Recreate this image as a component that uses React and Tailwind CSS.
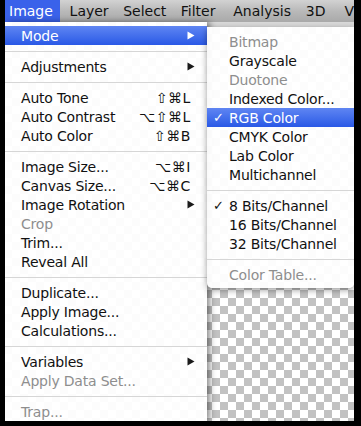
import React from "react";

const Arrow = ({ white }) => (
  <svg width="8" height="9" viewBox="0 0 8 9" className="shrink-0">
    <path d="M0.5 0.5 L7.5 4.5 L0.5 8.5 Z" fill={white ? "#ffffff" : "#1a1a1a"} />
  </svg>
);

const Sep = () => (
  <div className="h-[12px] flex items-center">
    <div className="h-px w-full bg-[#d6d6d6]" />
  </div>
);

function Item({ label, shortcut, arrow, disabled, active }) {
  return (
    <div
      className={
        "h-[19px] flex items-center pl-[16px] " +
        (active
          ? "bg-gradient-to-b from-[#5f85f2] to-[#2a58e6] text-white "
          : disabled
          ? "text-[#8e8e8e] "
          : "text-[#111111] ")
      }
    >
      <span className="flex-1 whitespace-nowrap">{label}</span>
      {shortcut && (
        <span className="pr-[16px] whitespace-nowrap tracking-[0.6px]">{shortcut}</span>
      )}
      {arrow && (
        <span className="pr-[12px] flex items-center">
          <Arrow white={active} />
        </span>
      )}
    </div>
  );
}

function SubItem({ label, checked, disabled, active }) {
  return (
    <div
      className={
        "h-[19px] flex items-center " +
        (active
          ? "bg-gradient-to-b from-[#5f85f2] to-[#2a58e6] text-white "
          : disabled
          ? "text-[#8e8e8e] "
          : "text-[#111111] ")
      }
    >
      <span className="w-[22px] pl-[6px] text-[13px] leading-none">{checked ? "✓" : ""}</span>
      <span className="whitespace-nowrap">{label}</span>
    </div>
  );
}

export default function App() {
  return (
    <div className="w-[361px] h-[426px] bg-black pl-[5px] pr-[7px] pb-[5px] font-['DejaVu_Sans',sans-serif] text-[14px] leading-none tracking-[-0.2px]">
      <div className="w-[349px] h-[421px] flex flex-col overflow-hidden bg-[conic-gradient(#c2c2c2_25%,#ffffff_0_50%,#c2c2c2_0_75%,#ffffff_0)] bg-[length:16px_16px] bg-[position:-1px_2px]">
        {/* menubar */}
        <div className="h-[22px] shrink-0 flex items-stretch bg-gradient-to-b from-[#d2d2d2] via-[#b9b9b9] to-[#a9a9a9] text-[#111111] text-[14px] tracking-normal">
          <div className="w-[55px] pl-[4px] flex items-center bg-[#3a62ea] text-white">Image</div>
          <div className="w-[54px] ml-[10px] flex items-center">Layer</div>
          <div className="w-[58px] flex items-center">Select</div>
          <div className="w-[53px] flex items-center">Filter</div>
          <div className="w-[73px] flex items-center">Analysis</div>
          <div className="w-[39px] flex items-center">3D</div>
          <div className="flex items-center">V</div>
        </div>
        <div className="flex flex-1 min-h-0">
          {/* main menu */}
          <div className="w-[202px] shrink-0 relative z-10 bg-[rgba(255,255,255,0.94)] pt-[4px] shadow-[3px_0_6px_rgba(0,0,0,0.45)]">
            <Item label="Mode" arrow active />
            <Sep />
            <Item label="Adjustments" arrow />
            <Sep />
            <Item label="Auto Tone" shortcut="⇧⌘L" />
            <Item label="Auto Contrast" shortcut="⌥⇧⌘L" />
            <Item label="Auto Color" shortcut="⇧⌘B" />
            <Sep />
            <Item label="Image Size..." shortcut="⌥⌘I" />
            <Item label="Canvas Size..." shortcut="⌥⌘C" />
            <Item label="Image Rotation" arrow />
            <Item label="Crop" disabled />
            <Item label="Trim..." />
            <Item label="Reveal All" />
            <Sep />
            <Item label="Duplicate..." />
            <Item label="Apply Image..." />
            <Item label="Calculations..." />
            <Sep />
            <Item label="Variables" arrow />
            <Item label="Apply Data Set..." disabled />
            <Sep />
            <Item label="Trap..." disabled />
          </div>
          {/* right column */}
          <div className="flex-1 flex flex-col">
            <div className="h-[5px] bg-[#d9d9d9]" />
            <div className="relative z-20 bg-[rgba(255,255,255,0.95)] rounded-b-[5px] pt-[5px] pb-[4px] shadow-[0_2px_6px_rgba(0,0,0,0.4)]">
              <SubItem label="Bitmap" disabled />
              <SubItem label="Grayscale" />
              <SubItem label="Duotone" disabled />
              <SubItem label="Indexed Color..." />
              <SubItem label="RGB Color" checked active />
              <SubItem label="CMYK Color" />
              <SubItem label="Lab Color" />
              <SubItem label="Multichannel" />
              <Sep />
              <SubItem label="8 Bits/Channel" checked />
              <SubItem label="16 Bits/Channel" />
              <SubItem label="32 Bits/Channel" />
              <Sep />
              <SubItem label="Color Table..." disabled />
            </div>
          </div>
        </div>
      </div>
    </div>
  );
}
